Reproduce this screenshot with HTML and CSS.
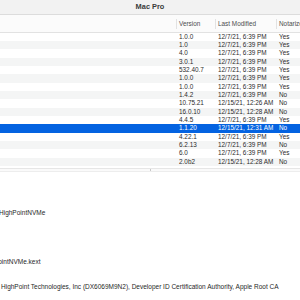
FILE: index.html
```html
<!DOCTYPE html>
<html lang="en">
<head>
  <meta charset="UTF-8">
  <title>Mac Pro</title>
  <link rel="stylesheet" href="styles.css">
</head>
<body>
  <div class="window">
    <header class="titlebar">Mac Pro</header>

    <div class="table">
      <div class="row head">
        <span class="cell"></span>
        <span class="cell">Version</span>
        <span class="cell">Last Modified</span>
        <span class="cell">Notarized</span>
      </div>

      <div class="rows">
        <div class="row"><span class="cell"></span><span class="cell">1.0.0</span><span class="cell">12/7/21, 6:39 PM</span><span class="cell">Yes</span></div>
        <div class="row"><span class="cell"></span><span class="cell">1.0</span><span class="cell">12/7/21, 6:39 PM</span><span class="cell">Yes</span></div>
        <div class="row"><span class="cell"></span><span class="cell">4.0</span><span class="cell">12/7/21, 6:39 PM</span><span class="cell">Yes</span></div>
        <div class="row"><span class="cell"></span><span class="cell">3.0.1</span><span class="cell">12/7/21, 6:39 PM</span><span class="cell">Yes</span></div>
        <div class="row"><span class="cell"></span><span class="cell">532.40.7</span><span class="cell">12/7/21, 6:39 PM</span><span class="cell">Yes</span></div>
        <div class="row"><span class="cell"></span><span class="cell">1.0.0</span><span class="cell">12/7/21, 6:39 PM</span><span class="cell">Yes</span></div>
        <div class="row"><span class="cell"></span><span class="cell">1.0.0</span><span class="cell">12/7/21, 6:39 PM</span><span class="cell">Yes</span></div>
        <div class="row"><span class="cell"></span><span class="cell">1.4.2</span><span class="cell">12/7/21, 6:39 PM</span><span class="cell">No</span></div>
        <div class="row"><span class="cell"></span><span class="cell">10.75.21</span><span class="cell">12/15/21, 12:26 AM</span><span class="cell">No</span></div>
        <div class="row"><span class="cell"></span><span class="cell">16.0.10</span><span class="cell">12/15/21, 12:28 AM</span><span class="cell">No</span></div>
        <div class="row"><span class="cell"></span><span class="cell">4.4.5</span><span class="cell">12/7/21, 6:39 PM</span><span class="cell">Yes</span></div>
        <div class="row selected"><span class="cell"></span><span class="cell">1.1.20</span><span class="cell">12/15/21, 12:31 AM</span><span class="cell">No</span></div>
        <div class="row"><span class="cell"></span><span class="cell">4.22.1</span><span class="cell">12/7/21, 6:39 PM</span><span class="cell">Yes</span></div>
        <div class="row"><span class="cell"></span><span class="cell">6.2.13</span><span class="cell">12/7/21, 6:39 PM</span><span class="cell">No</span></div>
        <div class="row"><span class="cell"></span><span class="cell">6.0</span><span class="cell">12/7/21, 6:39 PM</span><span class="cell">Yes</span></div>
        <div class="row"><span class="cell"></span><span class="cell">2.0b2</span><span class="cell">12/15/21, 12:28 AM</span><span class="cell">No</span></div>
      </div>

      <div class="hscroll"><div class="thumb"></div></div>
    </div>

    <div class="details">
      <p class="name">HighPointNVMe</p>
      <p class="path">HighPointNVMe.kext</p>
      <p class="signed">HighPoint Technologies, Inc (DX6069M9N2), Developer ID Certification Authority, Apple Root CA</p>
    </div>
  </div>
</body>
</html>
```

FILE: styles.css
```css
* {
  margin: 0;
  padding: 0;
  box-sizing: border-box;
}

body {
  font-family: "Liberation Sans", Arial, sans-serif;
  background: #ffffff;
  color: #262626;
  width: 300px;
  height: 300px;
  overflow: hidden;
}

.window {
  width: 300px;
  overflow: hidden;
}

.titlebar {
  height: 15px;
  line-height: 14px;
  background: #f2f2f2;
  border-bottom: 1px solid #dcdcdc;
  text-align: center;
  font-size: 7.4px;
  font-weight: bold;
  color: #3a3a3a;
}

/* Table */
.row {
  display: grid;
  grid-template-columns: 176px 39px 61px 1fr;
  height: 8.33px;
  font-size: 6.4px;
  line-height: 8.33px;
  white-space: nowrap;
  color: #2b2b2b;
}

.cell {
  padding-left: 3px;
  overflow: hidden;
}

.row.head {
  height: 17.7px;
  line-height: 17px;
  background: #fbfbfb;
  border-bottom: 1px solid #e2e2e2;
  color: #4d4d4d;
  align-items: center;
}

.row.head .cell {
  position: relative;
}

.row.head .cell + .cell::before {
  content: "";
  position: absolute;
  left: 0;
  top: 4px;
  height: 10px;
  border-left: 1px solid #e2e2e2;
}

.rows .row:nth-child(even) {
  background: #f4f5f5;
}

.rows .row.selected {
  background: #0463e1;
  color: #ffffff;
}

.hscroll {
  margin-top: 2.5px;
  height: 4px;
  border-top: 1px solid #e6e6e6;
  border-bottom: 1px solid #ededed;
  background: #fafafa;
}

.thumb {
  width: 151px;
  height: 100%;
  border-right: 1px solid #c8c8c8;
}

/* Details */
.details {
  font-size: 6.5px;
  line-height: 8px;
  color: #1f1f1f;
  white-space: nowrap;
}

.name {
  margin-top: 37px;
  margin-left: -1px;
}

.path {
  margin-top: 41px;
  margin-left: -19.5px;
}

.signed {
  margin-top: 17px;
  margin-left: 1px;
}
```
